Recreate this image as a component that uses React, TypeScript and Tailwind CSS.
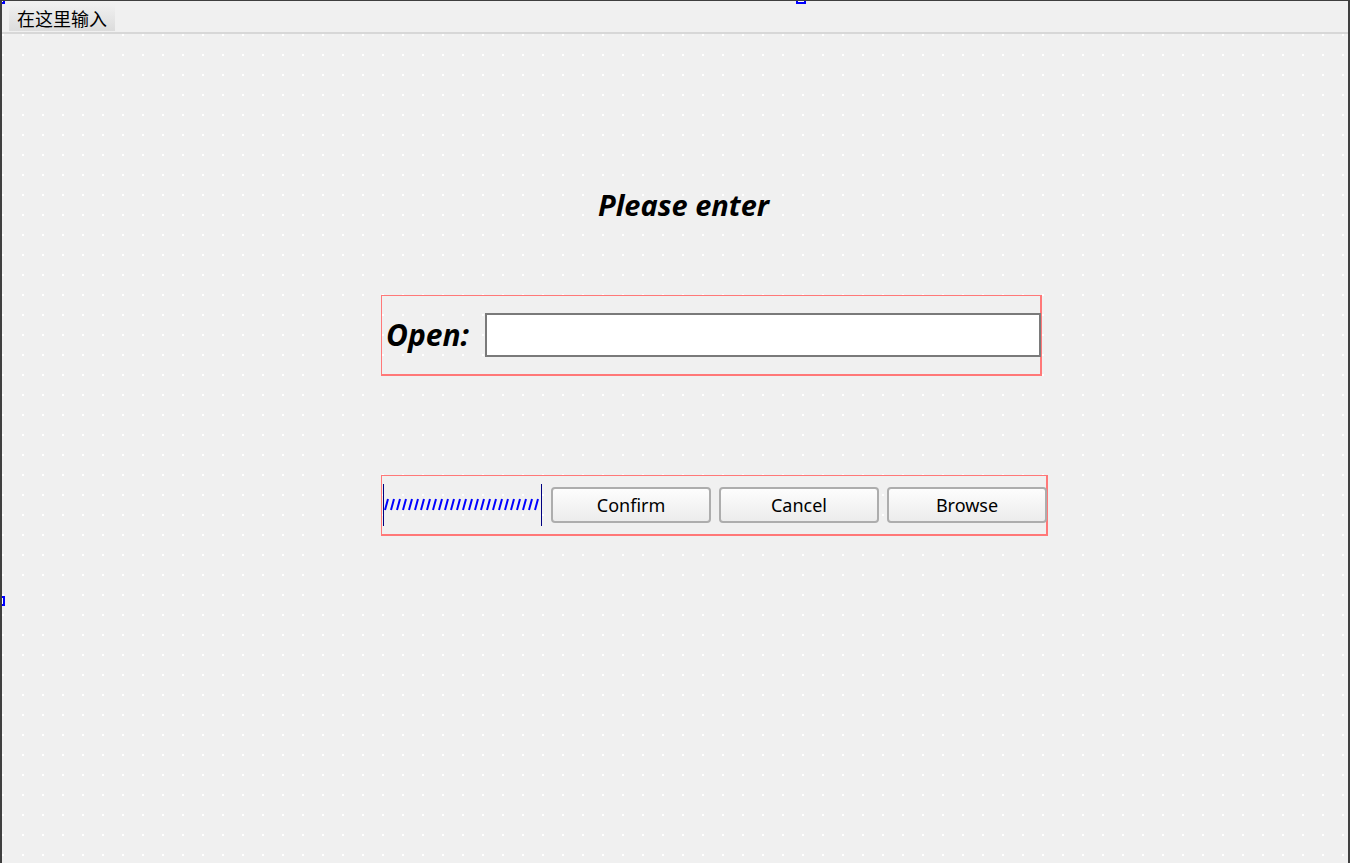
import React from 'react';

// Designer-style canvas: menu bar, grid of dots, two laid-out groups

const Handle: React.FC<{ className: string }> = ({ className }) => (
    <div className={`absolute w-[10px] h-[10px] border-2 border-[#0000ff] bg-white ${className}`} />
);

const DotGrid: React.FC = () => (
    <svg className="absolute inset-0 w-full h-full pointer-events-none" aria-hidden>
        <defs>
            <pattern id="dots" width="20" height="20" patternUnits="userSpaceOnUse">
                <rect x="0" y="0" width="2" height="2" fill="#ffffff" />
            </pattern>
        </defs>
        <rect width="100%" height="100%" fill="url(#dots)" />
    </svg>
);

// Blue hatched spacer drawn between two vertical bars
const Spacer: React.FC = () => {
    const slashes = [];
    for (let x = 2; x < 158; x += 6) {
        slashes.push(<line key={x} x1={x} y1={26} x2={x + 3} y2={15} stroke="#0000ff" strokeWidth={2} />);
    }
    return (
        <svg width="160" height="42" className="shrink-0">
            <line x1="0.5" y1="0" x2="0.5" y2="42" stroke="#000080" strokeWidth={1} />
            <line x1="158.5" y1="0" x2="158.5" y2="42" stroke="#000080" strokeWidth={1} />
            {slashes}
        </svg>
    );
};

const Button: React.FC<{ label: string }> = ({ label }) => (
    <button className="w-[160px] h-[36px] shrink-0 rounded-[4px] border-2 border-[#adadad] bg-[linear-gradient(#fdfdfd,#ececec)] text-[18px] text-black font-['Noto_Sans',sans-serif] leading-none">
        {label}
    </button>
);

export default function App() {
    return (
        <div className="relative w-[1350px] h-[863px] overflow-hidden bg-[#f0f0f0] border-t border-l-2 border-r-2 border-[#3f3f3f] flex flex-col">
            {/* Menu bar */}
            <div className="h-[33px] shrink-0 border-b-2 border-[#d7d7d7] flex items-start pl-[7px] pt-[3px]">
                <div className="h-[27px] px-[8px] flex items-center bg-[linear-gradient(#f0f0f0,#dcdcdc)] text-[18px] text-black font-['Noto_Sans_CJK_SC',sans-serif] leading-none">
                    在这里输入
                </div>
            </div>

            {/* Form canvas */}
            <div className="relative flex-1">
                <DotGrid />
                <div className="relative flex flex-col pl-[379px]">
                    <div className="pt-[154px] pl-[217px] h-[261px] shrink-0 text-[29px] font-bold italic leading-[34px] text-black font-['Noto_Sans',sans-serif]">
                        Please enter
                    </div>
                    {/* Horizontal layout: label + line edit */}
                    <div className="w-[661px] h-[81px] border-t border-l border-r-2 border-b-2 border-solid border-[#ff7878] flex items-center pl-[4px]">
                        <span className="w-[99px] shrink-0 text-[30px] font-bold italic text-black font-['Noto_Sans',sans-serif] leading-none">
                            Open:
                        </span>
                        <div className="w-[556px] h-[44px] shrink-0 bg-white border-2 border-[#7a7a7a]" />
                    </div>
                    <div className="h-[99px] shrink-0" />
                    {/* Horizontal layout: spacer + three buttons */}
                    <div className="w-[667px] h-[61px] border-t border-l border-r-2 border-b-2 border-solid border-[#ff7878] flex items-center pl-[1px] gap-[8px]">
                        <Spacer />
                        <Button label="Confirm" />
                        <Button label="Cancel" />
                        <Button label="Browse" />
                    </div>
                </div>
            </div>

            {/* Selection handles of the form */}
            <Handle className="-left-[7px] -top-[7px]" />
            <Handle className="left-[794px] -top-[7px]" />
            <Handle className="-left-[7px] top-[595px]" />
        </div>
    );
}
